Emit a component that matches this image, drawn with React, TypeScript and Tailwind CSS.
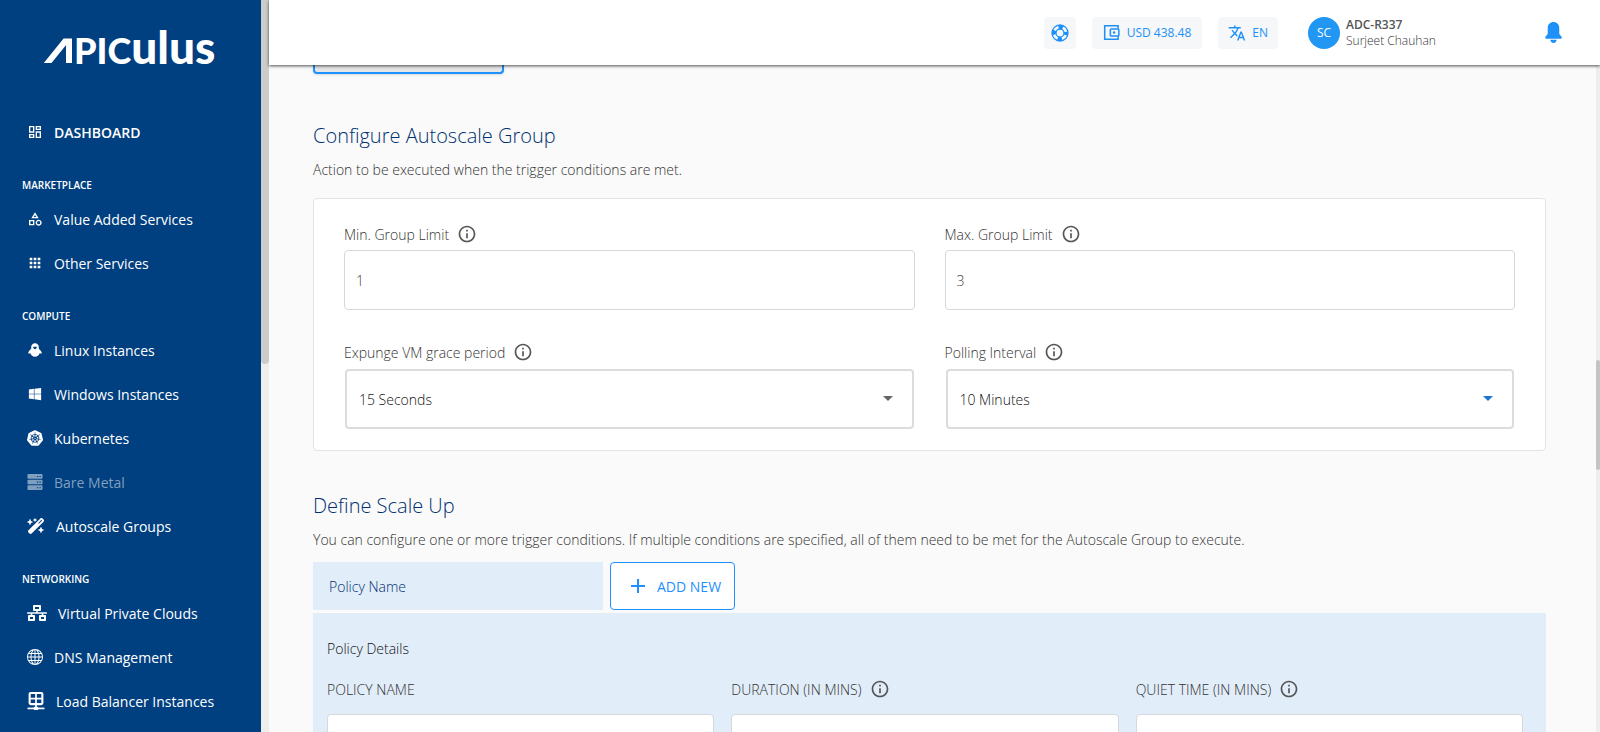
import React from 'react';
import clsx from 'clsx';
import { FaWindows, FaNetworkWired } from 'react-icons/fa';
import { MdOutlineDashboard, MdOutlineCategory, MdApps, MdTranslate, MdAdd, MdArrowDropDown, MdInfoOutline } from 'react-icons/md';
import { SiKubernetes } from 'react-icons/si';
import { BsGlobe } from 'react-icons/bs';
import { FaWandMagicSparkles } from 'react-icons/fa6';

type IconType = React.ComponentType<{ className?: string }>;

interface NavItem {
  label: string;
  icon: IconType;
  disabled?: boolean;
  iconClass?: string;
}

interface NavSection {
  title: string;
  items: NavItem[];
}

const PenguinIcon: IconType = ({ className }) => (
  <svg viewBox="0 0 24 24" fill="currentColor" className={className}>
    <path
      fillRule="evenodd"
      d="M12 .5C8 .5 5.500 3.500 5.500 7v3C3 12 1 14.500.3 17c0 .8.900 1.100 1.700.9l2-.5c1.300 3.600 4.300 6.100 8 6.100s6.700-2.500 8-6.100l2 .5c.8.2 1.700-.1 1.700-.9-.7-2.500-2.700-5-5.200-7V7c0-3.500-2.500-6.500-6.500-6.500zM9 6.500h6v2.200l-3 2.300-3-2.300z"
    />
  </svg>
);

const RackIcon: IconType = ({ className }) => (
  <svg viewBox="0 0 16 17" fill="currentColor" className={className}>
    {[0, 6, 12].map((y) => (
      <path
        key={y}
        fillRule="evenodd"
        d={`M1 ${y}h14a1 1 0 0 1 1 1v3a1 1 0 0 1-1 1H1a1 1 0 0 1-1-1v-3a1 1 0 0 1 1-1zM10 ${y + 2}v1.200h1.500v-1.200zM12.700 ${y + 2}v1.200h1.500v-1.200z`}
      />
    ))}
  </svg>
);

const BalancerIcon: IconType = ({ className }) => (
  <svg viewBox="0 0 16 17" fill="none" stroke="currentColor" className={className}>
    <rect x="2" y="1" width="12" height="10.500" rx="1" strokeWidth="2" />
    <path d="M8 1v14M2 6.200h12" strokeWidth="1.600" />
    <path d="M0 15.500h16" strokeWidth="1.600" />
    <path d="M6 15.500h4" strokeWidth="3" />
  </svg>
);

const LifebuoyIcon: IconType = ({ className }) => (
  <svg viewBox="0 0 18 18" fill="none" stroke="currentColor" className={className}>
    <circle cx="9" cy="9" r="8" strokeWidth="1.300" />
    <circle cx="9" cy="9" r="4" strokeWidth="1.300" />
    <circle cx="9" cy="9" r="6" strokeWidth="4" strokeDasharray="4.400 5.025" strokeDashoffset="2.200" />
  </svg>
);

const WalletIcon: IconType = ({ className }) => (
  <svg viewBox="0 0 18 18" fill="none" stroke="currentColor" strokeWidth="1.600" className={className}>
    <path d="M16 5V1.800H1.800v14.400H16V13" />
    <rect x="7.800" y="5.200" width="9" height="7.600" rx="1" />
    <circle cx="11.700" cy="9" r="1.300" fill="currentColor" stroke="none" />
  </svg>
);

const BellIcon: IconType = ({ className }) => (
  <svg viewBox="0 0 16 20" fill="currentColor" className={className}>
    <path d="M8 0C4.800 0 2.500 2.400 2.500 5.500V11.500L.5 13.800C-.3 14.700.3 16 1.300 16h13.400c1 0 1.600-1.300.8-2.200L13.500 11.500V5.500C13.500 2.400 11.200 0 8 0zM5 17h6c0 1.800-1.300 3-3 3s-3-1.200-3-3z" />
  </svg>
);

const SECTIONS: NavSection[] = [
  {
    title: 'MARKETPLACE',
    items: [
      { label: 'Value Added Services', icon: MdOutlineCategory },
      { label: 'Other Services', icon: MdApps },
    ],
  },
  {
    title: 'COMPUTE',
    items: [
      { label: 'Linux Instances', icon: PenguinIcon, iconClass: 'size-[14px] mx-px' },
      { label: 'Windows Instances', icon: FaWindows, iconClass: 'size-[14px] mx-px' },
      { label: 'Kubernetes', icon: SiKubernetes },
      { label: 'Bare Metal', icon: RackIcon, disabled: true },
      { label: 'Autoscale Groups', icon: FaWandMagicSparkles, iconClass: 'size-[18px]' },
    ],
  },
  {
    title: 'NETWORKING',
    items: [
      { label: 'Virtual Private Clouds', icon: FaNetworkWired, iconClass: 'size-5' },
      { label: 'DNS Management', icon: BsGlobe },
      { label: 'Load Balancer Instances', icon: BalancerIcon, iconClass: 'size-[18px]' },
    ],
  },
];

function Logo() {
  return (
    <a href="#home" aria-label="Apiculus" className="flex h-8 items-end pl-11 text-white">
      <svg viewBox="0 0 30 25" className="h-[25px] w-[30px]" fill="none" stroke="currentColor" strokeWidth="6">
        <path d="M2 27 L21 3.500 H28 M25 1 V25" />
      </svg>
      <span className="flex items-baseline pb-px font-['Lato'] text-[36px] leading-[24px] font-black">
        <span>PIC</span>
        <span className="text-[46px]">ulus</span>
      </span>
    </a>
  );
}

function Sidebar() {
  return (
    <aside className="flex w-[269px] shrink-0 bg-[#eeeeee]">
      <nav className="w-[261px] shrink-0 overflow-hidden bg-[#003f80] pt-[31px] text-white">
        <Logo />
        <a href="#dashboard" className="mt-[47px] flex h-11 items-center gap-[11px] pl-[27px] text-[14px] font-semibold">
          <MdOutlineDashboard className="size-4" />
          DASHBOARD
        </a>
        {SECTIONS.map((section) => (
          <section key={section.title}>
            <h2 className="mt-[21px] mb-[2px] pl-[22px] text-[10px] leading-[20px] font-semibold">{section.title}</h2>
            {section.items.map(({ label, icon: Icon, disabled, iconClass }) => (
              <a
                key={label}
                href="#nav"
                className={clsx('flex h-11 items-center gap-[11px] pl-[27px] text-[14px]', disabled && 'text-[#7f9fbf]')}
              >
                <Icon className={iconClass ?? 'size-4'} />
                {label}
              </a>
            ))}
          </section>
        ))}
      </nav>
      <div className="h-[364px] w-2 rounded-b-full bg-[#cccccc]" />
    </aside>
  );
}

function Header() {
  return (
    <header className="relative z-10 flex h-[65px] shrink-0 items-center justify-end bg-white pr-[38px] text-[12px] text-[#1e90f8] shadow-[0_1px_3px_rgba(0,0,0,0.7)]">
      <button aria-label="Support" className="flex h-8 w-8 items-center justify-center rounded bg-[#f5f7f9]">
        <LifebuoyIcon className="size-[18px]" />
      </button>
      <button className="ml-4 flex h-8 items-center gap-[7px] rounded bg-[#f5f7f9] px-[11px]">
        <WalletIcon className="size-[17px]" />
        USD 438.48
      </button>
      <button className="ml-4 flex h-8 items-center gap-[6px] rounded bg-[#f5f7f9] px-[10px]">
        <MdTranslate className="size-[18px]" />
        EN
      </button>
      <div className="ml-[30px] flex w-[237px] items-center gap-[6px]">
        <span className="flex size-8 items-center justify-center rounded-full bg-[#2196f3] text-white">SC</span>
        <div className="leading-4 text-[#555555]">
          <p className="font-semibold">ADC-R337</p>
          <p className="font-light text-[#333333]">Surjeet Chauhan</p>
        </div>
      </div>
      <button aria-label="Notifications">
        <BellIcon className="h-[21px] w-[17px]" />
      </button>
    </header>
  );
}

function FieldLabel({ htmlFor, children, info = true }: { htmlFor: string; children: React.ReactNode; info?: boolean }) {
  return (
    <label htmlFor={htmlFor} className="flex h-5 items-end gap-2 text-[14px] leading-[18px] text-[#333333]">
      {children}
      {info && <MdInfoOutline className="size-5 text-[#555555]" />}
    </label>
  );
}

function TextField({ id, label, value }: { id: string; label: string; value: string }) {
  return (
    <div>
      <FieldLabel htmlFor={id}>{label}</FieldLabel>
      <input
        id={id}
        defaultValue={value}
        className="mt-[6px] block h-[60px] w-full rounded border border-[#d6d9dc] bg-white px-[11px] text-[14px] text-[#444444]"
      />
    </div>
  );
}

function SelectField({ id, label, value, active }: { id: string; label: string; value: string; active?: boolean }) {
  return (
    <div>
      <FieldLabel htmlFor={id}>{label}</FieldLabel>
      <div className="relative mx-px mt-[7px]">
        <select
          id={id}
          className="block h-[60px] w-full appearance-none rounded border-2 border-[#dcdcdc] bg-white px-3 text-[14px] text-[#111111]"
        >
          <option>{value}</option>
        </select>
        <MdArrowDropDown
          className={clsx('pointer-events-none absolute top-[17px] right-[14px] size-6', active ? 'text-[#1976d2]' : 'text-[#666666]')}
        />
      </div>
    </div>
  );
}

function PolicyField({ id, label, info }: { id: string; label: string; info?: boolean }) {
  return (
    <div>
      <FieldLabel htmlFor={id} info={info}>{label}</FieldLabel>
      <input id={id} className="mt-[15px] block h-[60px] w-full rounded border border-[#d6d9dc] bg-white px-3 text-[14px]" />
    </div>
  );
}

export default function App() {
  return (
    <div className="flex h-screen overflow-hidden bg-[#fafafa] font-['Open_Sans','Noto_Sans',sans-serif]">
      <Sidebar />
      <div className="flex min-w-0 flex-1 flex-col">
        <Header />
        <div className="flex min-h-0 flex-1">
          <main className="min-w-0 flex-1 overflow-hidden pr-[50px] pl-11 font-light">
            <button
              aria-label="Previous step"
              className="block h-[9px] w-[191px] rounded-b border-2 border-t-0 border-[#1e90ff] bg-[#e6e6e6] shadow"
            />

            <section className="mt-[46px]">
              <h1 className="text-[20px] leading-8 text-[#003070]">Configure Autoscale Group</h1>
              <p className="mt-2 text-[14px] leading-5 text-[#333333]">
                Action to be executed when the trigger conditions are met.
              </p>
              <div className="mt-[18px] grid grid-cols-2 gap-x-[30px] gap-y-8 rounded border border-[#e4e4e4] bg-white px-[30px] pt-[25px] pb-[21px]">
                <TextField id="min-limit" label="Min. Group Limit" value="1" />
                <TextField id="max-limit" label="Max. Group Limit" value="3" />
                <SelectField id="grace" label="Expunge VM grace period" value="15 Seconds" />
                <SelectField id="polling" label="Polling Interval" value="10 Minutes" active />
              </div>
            </section>

            <section className="mt-[39px]">
              <h1 className="text-[20px] leading-8 text-[#003070]">Define Scale Up</h1>
              <p className="mt-2 text-[14px] leading-5 text-[#333333]">
                You can configure one or more trigger conditions. If multiple conditions are specified, all of them need to be
                met for the Autoscale Group to execute.
              </p>
              <div className="mt-3 flex gap-[7px]">
                <button className="h-12 w-[290px] bg-[#e1edf9] px-4 text-left text-[14px] text-[#003070]">Policy Name</button>
                <button className="flex h-12 items-center gap-[7px] rounded border border-[#1e90ff] bg-white pr-[13px] pl-[15px] text-[14px] font-normal text-[#1e90ff]">
                  <MdAdd className="size-6" />
                  ADD NEW
                </button>
              </div>
              <div className="mt-[3px] bg-[#e1edf9] pt-[26px] pr-[23px] pb-8 pl-[14px]">
                <h2 className="text-[14px] leading-5 text-[#111111]">Policy Details</h2>
                <div className="mt-[20px] grid grid-cols-3 gap-x-[17px]">
                  <PolicyField id="policy-name" label="POLICY NAME" info={false} />
                  <PolicyField id="duration" label="DURATION (IN MINS)" />
                  <PolicyField id="quiet-time" label="QUIET TIME (IN MINS)" />
                </div>
              </div>
            </section>
          </main>
          <div className="w-1 shrink-0 bg-[#eeeeee] pt-[295px]">
            <div className="h-[110px] rounded-full bg-[#c4c4c4]" />
          </div>
        </div>
      </div>
    </div>
  );
}
